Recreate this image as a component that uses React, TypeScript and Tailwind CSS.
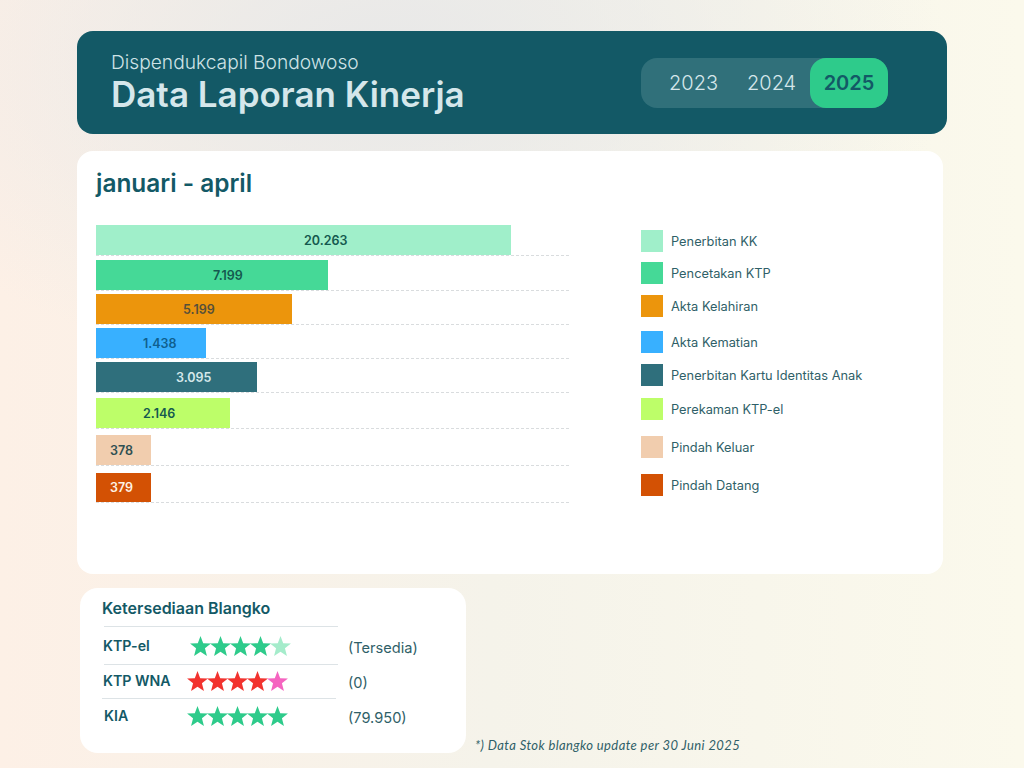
const bars = [
  { value: "20.263", outer: "h-[31px] mt-[0px]", bar: "h-[30px] w-[415px] bg-[#a0efca] text-[#14594f]", text: "pl-[208px]" },
  { value: "7.199", outer: "h-[31px] mt-[4px]", bar: "h-[30px] w-[232px] bg-[#45d997] text-[#14594f]", text: "pl-[117px]" },
  { value: "5.199", outer: "h-[31px] mt-[3px]", bar: "h-[30px] w-[196px] bg-[#ec950c] text-[#55503a]", text: "pl-[87px]" },
  { value: "1.438", outer: "h-[31px] mt-[3px]", bar: "h-[30px] w-[110px] bg-[#38b0ff] text-[#0f5f8f]", text: "pl-[47px]" },
  { value: "3.095", outer: "h-[31px] mt-[3px]", bar: "h-[30px] w-[161px] bg-[#2f6f7c] text-[#d5e8ea]", text: "pl-[80px]" },
  { value: "2.146", outer: "h-[31px] mt-[5px]", bar: "h-[30px] w-[134px] bg-[#bdfe69] text-[#14594f]", text: "pl-[47px]" },
  { value: "378", outer: "h-[31px] mt-[6px]", bar: "h-[30px] w-[55px] bg-[#f1cdae] text-[#2f5052]", text: "pl-[14px]" },
  { value: "379", outer: "h-[30px] mt-[7px]", bar: "h-[29px] w-[55px] bg-[#d35104] text-[#fdf3e6]", text: "pl-[14px]" },
];

const legend = [
  { label: "Penerbitan KK", gap: "mt-0", swatch: "bg-[#a0efca]" },
  { label: "Pencetakan KTP", gap: "mt-[10px]", swatch: "bg-[#45d997]" },
  { label: "Akta Kelahiran", gap: "mt-[11px]", swatch: "bg-[#ec950c]" },
  { label: "Akta Kematian", gap: "mt-[14px]", swatch: "bg-[#38b0ff]" },
  { label: "Penerbitan Kartu Identitas Anak", gap: "mt-[11px]", swatch: "bg-[#2f6f7c]" },
  { label: "Perekaman KTP-el", gap: "mt-[12px]", swatch: "bg-[#bdfe69]" },
  { label: "Pindah Keluar", gap: "mt-[16px]", swatch: "bg-[#f1cdae]" },
  { label: "Pindah Datang", gap: "mt-[16px]", swatch: "bg-[#d35104]" },
];

const stock = [
  { name: "KTP-el", note: "(Tersedia)", stars: ["#2ecb8b", "#2ecb8b", "#2ecb8b", "#2ecb8b", "#a5eccb"], starCls: "ml-[87px]", labelCls: "ml-[1px]", gap: "mt-[7px]", line: "mt-[6px] ml-[2px]" },
  { name: "KTP WNA", note: "(0)", stars: ["#f2332f", "#f2332f", "#f2332f", "#f2332f", "#f564c0"], starCls: "ml-[84px]", labelCls: "ml-[1px]", gap: "mt-[4px]", line: "mt-[5px] ml-[0px]" },
  { name: "KIA", note: "(79.950)", stars: ["#2ecb8b", "#2ecb8b", "#2ecb8b", "#2ecb8b", "#2ecb8b"], starCls: "ml-[83px]", labelCls: "ml-[2px]", gap: "mt-[5px]", line: "" },
];

function StarIcon({ color }: { color: string }) {
  return (
    <svg width="21" height="20" viewBox="0 0 24 23" className="shrink-0 -mx-[0.5px]">
      <polygon fill={color} points="12,0 15.1,8.2 24,8.7 17.1,14.2 19.4,23 12,18.1 4.6,23 6.9,14.2 0,8.7 8.9,8.2" />
    </svg>
  );
}

export default function App() {
  return (
    <div className="w-[1024px] h-[768px] overflow-hidden pt-[31px] pl-[77px] bg-[radial-gradient(ellipse_560px_320px_at_38%_8%,#e8e8e8_0%,rgba(232,232,232,0)_100%),linear-gradient(90deg,#fdf0e6_0%,#f5f3ea_48%,#fbf9ec_100%)] font-['Inter',sans-serif]">
      <header className="w-[870px] h-[103px] rounded-[16px] bg-[#135966] flex items-center justify-between pl-[34px] pr-[59px]">
        <div className="flex flex-col">
          <span className="text-[19.2px] leading-[22px] font-light text-[#cfe3e6]">Dispendukcapil Bondowoso</span>
          <span className="text-[35px] leading-[42px] font-semibold text-[#d5e7eb]">Data Laporan Kinerja</span>
        </div>
        <div className="w-[247px] h-[50px] rounded-[16px] bg-[#30707a] flex items-center text-[20px] text-[#d5e7eb]">
          <span className="ml-[28px] w-[48px] text-center font-light">2023</span>
          <span className="ml-[30px] w-[48px] text-center font-light">2024</span>
          <span className="ml-[15px] w-[78px] h-[50px] rounded-[16px] bg-[#2ecb8b] flex items-center justify-center font-semibold text-[#135966]">2025</span>
        </div>
      </header>

      <main className="w-[866px] h-[423px] mt-[17px] rounded-[16px] bg-white pt-[16px] pl-[19px]">
        <h2 className="text-[24.4px] leading-[32px] font-semibold text-[#135966]">januari - april</h2>
        <div className="flex mt-[26px]">
          <div className="w-[473px] flex flex-col">
            {bars.map((b) => (
              <div key={b.value} className={`border-b border-dashed border-[#d9dcde] ${b.outer}`}>
                <div className={`pt-[2px] flex items-center font-semibold text-[12.5px] ${b.bar} ${b.text}`}>
                  {b.value}
                </div>
              </div>
            ))}
          </div>
          <div className="ml-[72px] pt-[5px] flex flex-col">
            {legend.map((l) => (
              <div key={l.label} className={`h-[22px] flex items-start gap-[8px] ${l.gap}`}>
                <div className={`w-[22px] h-[22px] ${l.swatch}`} />
                <span className="h-[22px] text-[12.8px] leading-[24px] text-[#2f5f68]">{l.label}</span>
              </div>
            ))}
          </div>
        </div>
      </main>

      <section className="flex items-end mt-[14px] ml-[3px]">
        <div className="w-[386px] h-[165px] rounded-[18px] bg-white pt-[9px] pl-[22px] pr-[21px]">
          <h3 className="text-[16px] leading-[22px] font-semibold text-[#135966]">Ketersediaan Blangko</h3>
          <div className="w-[234px] mt-[7px] ml-[2px] border-t border-[#dde3e6]" />
          {stock.map((s) => (
            <div key={s.name}>
              <div className={`flex items-center h-[24px] ${s.gap}`}>
                <span className={`w-0 whitespace-nowrap text-[14.2px] font-semibold text-[#135966] ${s.labelCls}`}>{s.name}</span>
                <div className={`flex w-[100px] shrink-0 ${s.starCls}`}>
                  {s.stars.map((c, j) => (
                    <StarIcon key={j} color={c} />
                  ))}
                </div>
                <span className="ml-auto w-[97px] pt-[4px] text-[14.6px] leading-[20px] text-[#2f5f68]">{s.note}</span>
              </div>
              {s.line && <div className={`w-[234px] border-t border-[#dde3e6] ${s.line}`} />}
            </div>
          ))}
        </div>
        <p className="ml-[9px] text-[13px] leading-[16px] italic text-[#2f5f68] font-['Lato',sans-serif] tracking-[0.4px]">*) Data Stok blangko update per 30 Juni 2025</p>
      </section>
    </div>
  );
}
